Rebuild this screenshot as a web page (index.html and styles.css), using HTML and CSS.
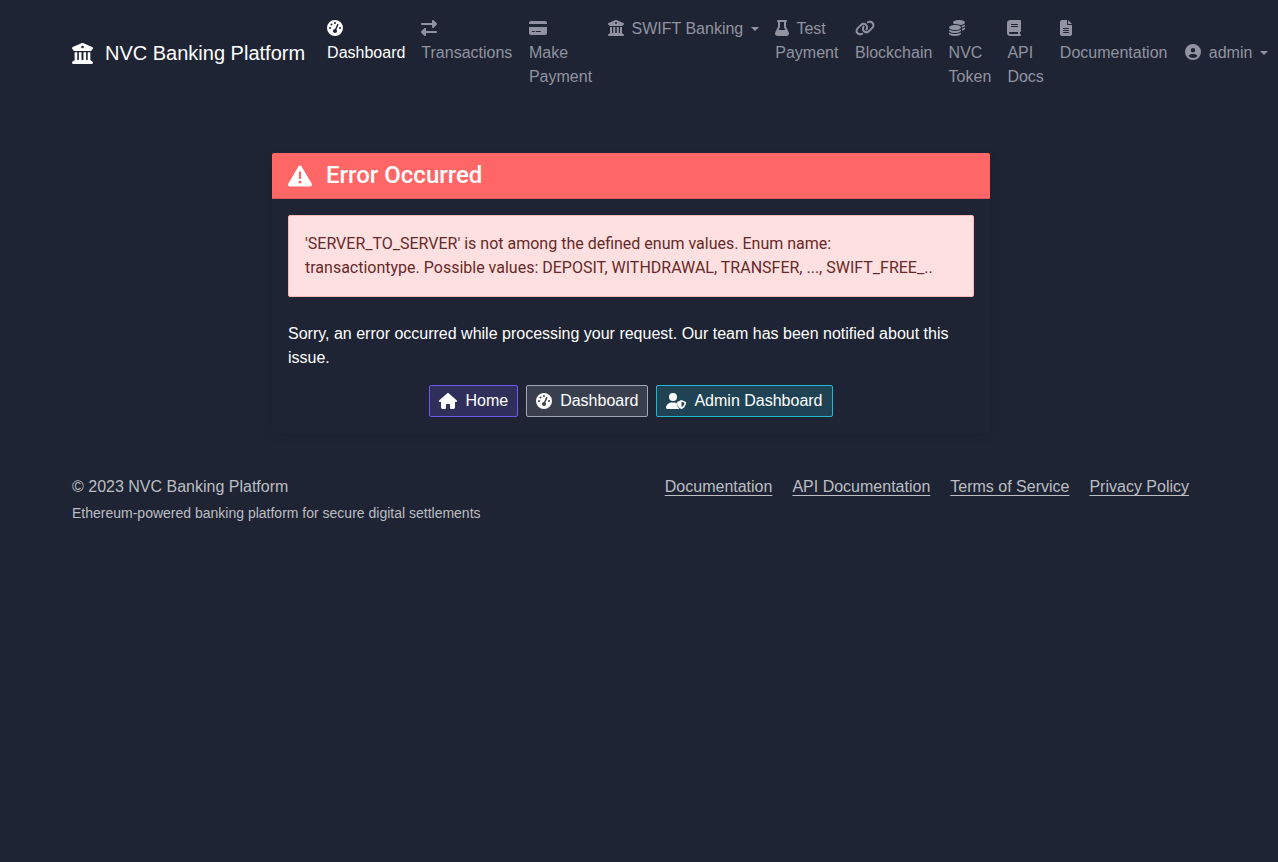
FILE: index.html
```html
<!DOCTYPE html>
<html lang="en">
<head>
<meta charset="utf-8">
<meta name="viewport" content="width=device-width, initial-scale=1">
<title>Error - NVC Banking Platform</title>
<link rel="stylesheet" href="styles.css">
</head>
<body>
<svg class="sprite" aria-hidden="true">
  <symbol id="i-bank" viewBox="0 0 512 512"><path fill-rule="evenodd" d="M243.4 2.6l-224 96c-14 6-21.800 21-18.700 35.800S16.800 160 32 160v8c0 13.300 10.700 24 24 24h400c13.300 0 24-10.700 24-24v-8c15.200 0 28.300-10.700 31.300-25.600s-4.800-29.900-18.700-35.800l-224-96c-8-3.400-17.200-3.400-25.200 0zM128 224H64v196.300c-.6.3-1.200.7-1.800 1.100l-48 32c-11.700 7.800-17 22.400-12.900 35.900S17.900 512 32 512h448c14.100 0 26.500-9.200 30.600-22.700s-1.100-28.100-12.900-35.900l-48-32c-.6-.4-1.200-.7-1.800-1.100V224h-64v192h-40V224h-64v192h-48V224h-64v192h-40V224zM256 64a32 32 0 1 1 0 64 32 32 0 1 1 0-64z"/></symbol>
  <symbol id="i-gauge" viewBox="0 0 512 512"><path fill-rule="evenodd" d="M0 256a256 256 0 1 1 512 0A256 256 0 1 1 0 256zM288 96a32 32 0 1 0-64 0 32 32 0 1 0 64 0zM256 416c35.300 0 64-28.700 64-64 0-17.400-6.900-33.100-18.100-44.600L366 161.700c5.300-12.100-.2-26.300-12.300-31.600s-26.300.2-31.600 12.300L257.900 288H256c-35.300 0-64 28.700-64 64s28.700 64 64 64zM176 144a32 32 0 1 0-64 0 32 32 0 1 0 64 0zM96 288a32 32 0 1 0 0-64 32 32 0 1 0 0 64zM448 256a32 32 0 1 0-64 0 32 32 0 1 0 64 0z"/></symbol>
  <symbol id="i-transfer" viewBox="0 0 512 512"><path d="M32 96h320V32c0-12.900 7.800-24.600 19.800-29.600s25.700-2.200 34.900 6.900l96 96c6 6 9.400 14.100 9.400 22.600s-3.400 16.600-9.400 22.600l-96 96c-9.200 9.200-22.900 11.900-34.900 6.900S352 236.900 352 224v-64H32c-17.700 0-32-14.300-32-32s14.300-32 32-32zM480 352c17.700 0 32 14.300 32 32s-14.300 32-32 32H160v64c0 12.900-7.800 24.600-19.800 29.600s-25.700 2.200-34.900-6.900l-96-96c-6-6-9.400-14.100-9.400-22.600s3.400-16.600 9.400-22.600l96-96c9.200-9.200 22.900-11.900 34.900-6.900S160 275.100 160 288v64z"/></symbol>
  <symbol id="i-card" viewBox="0 0 576 512"><path fill-rule="evenodd" d="M64 32C28.700 32 0 60.700 0 96v32h576V96c0-35.300-28.700-64-64-64H64zM576 224H0v192c0 35.300 28.700 64 64 64h448c35.300 0 64-28.700 64-64V224zM112 352h64a16 16 0 0 1 0 32h-64a16 16 0 0 1 0-32zM240 352h128a16 16 0 0 1 0 32H240a16 16 0 0 1 0-32z"/></symbol>
  <symbol id="i-flask" viewBox="0 0 448 512"><path fill-rule="evenodd" d="M288 0H96a32 32 0 0 0 0 64v151L7 400c-4 10-7 21-7 32 0 44 36 80 80 80h288c44 0 80-36 80-80 0-11-3-22-7-32L352 215V64a32 32 0 0 0 0-64zM160 64h128v151c0 12 3 22 8 32l36 73H116l36-73c5-10 8-20 8-32z"/></symbol>
  <symbol id="i-link" viewBox="0 0 640 512"><path d="M579.800 267.700c56.500-56.500 56.500-148 0-204.500-50-50-128.800-56.500-186.300-15.400l-1.600 1.100c-14.400 10.300-17.700 30.300-7.400 44.600s30.300 17.700 44.600 7.400l1.600-1.100c32.100-22.900 76-19.300 103.800 8.600 31.500 31.500 31.500 82.500 0 114L422.300 334.800c-31.500 31.500-82.500 31.500-114 0-27.900-27.900-31.500-71.800-8.600-103.800l1.100-1.600c10.300-14.400 6.900-34.400-7.400-44.600s-34.400-6.900-44.600 7.400l-1.100 1.600C206.500 251.200 213 330 263 380c56.500 56.500 148 56.500 204.500 0zM60.200 244.300c-56.500 56.500-56.500 148 0 204.500 50 50 128.800 56.500 186.300 15.400l1.600-1.100c14.400-10.300 17.700-30.300 7.400-44.600s-30.300-17.700-44.600-7.400l-1.600 1.100c-32.100 22.900-76 19.300-103.800-8.600C74 372 74 321 105.500 289.500l112.200-112.300c31.500-31.500 82.500-31.500 114 0 27.900 27.900 31.500 71.800 8.600 103.900l-1.100 1.600c-10.300 14.400-6.900 34.400 7.400 44.600s34.400 6.900 44.600-7.400l1.100-1.600C433.500 260.800 427 182 377 132c-56.500-56.500-148-56.500-204.500 0z"/></symbol>
  <symbol id="i-coins" viewBox="0 0 512 512"><path d="M512 80c0 18-14.300 34.600-38.400 48-29.100 16.100-72.500 27.500-122.300 30.900-3.700-1.800-7.400-3.500-11.300-5C300.600 137.400 248.200 128 192 128c-8.300 0-16.400.2-24.500.6l-1.100-.6C142.300 114.600 128 98 128 80c0-44.200 86-80 192-80s192 35.800 192 80zM160.700 161.100c10.200-.7 20.700-1.100 31.300-1.100 62.200 0 117.400 12.300 152.500 31.400C369.300 204.900 384 221.700 384 240c0 4-.7 7.900-2.100 11.700-4.600 13.200-17 25.300-35 35.500-31.900 19.100-89.300 32.800-154.900 32.800-63 0-118.700-12.600-153.800-32.100C14.100 274.500 0 258 0 240c0-34.800 53.400-64.500 128-75.400 10.500-1.500 21.400-2.700 32.700-3.500zM416 240c0-21.900-10.600-39.900-24.100-53.400 28.300-4.400 54.200-11.400 76.200-20.500 16.300-6.800 31.500-15.200 43.900-25.500V176c0 19.300-16.500 37.100-43.800 50.900-14.600 7.400-32.400 13.700-52.400 18.500.1-1.800.1-3.500.1-5.400zm-32 96c0 18-14.300 34.600-38.400 48C310.500 403.500 255 416 192 416s-118.500-12.600-153.600-32C14.300 370.600 0 354 0 336v-35.400c12.500 10.300 27.600 18.700 43.900 25.500C83.400 342.600 135.800 352 192 352s108.600-9.400 148.100-25.900c16.600-6.700 31.300-15.100 43.900-25.500zm32 0v-58.800c18.600-4.200 36.800-9.500 52.100-16 16.300-6.800 31.500-15.200 43.900-25.500V272c0 30.500-40.100 52.300-96.100 64.800zM192 448c56.200 0 108.600-9.400 148.100-25.900 16.300-6.800 31.500-15.200 43.900-25.500V432c0 44.200-86 80-192 80S0 476.200 0 432v-35.400c12.500 10.300 27.600 18.700 43.900 25.500C83.400 438.600 135.800 448 192 448z"/></symbol>
  <symbol id="i-book" viewBox="0 0 448 512"><path fill-rule="evenodd" d="M96 0C43 0 0 43 0 96v320c0 53 43 96 96 96h320a32 32 0 0 0 0-64v-64c17.700 0 32-14.300 32-32V32c0-17.700-14.300-32-32-32H96zM96 384h256v64H96a32 32 0 0 1 0-64zM144 128h192a16 16 0 0 1 0 32H144a16 16 0 0 1 0-32zM144 192h192a16 16 0 0 1 0 32H144a16 16 0 0 1 0-32z"/></symbol>
  <symbol id="i-file" viewBox="0 0 384 512"><path fill-rule="evenodd" d="M64 0C28.700 0 0 28.700 0 64v384c0 35.300 28.700 64 64 64h256c35.300 0 64-28.700 64-64V160H256c-17.700 0-32-14.300-32-32V0H64zM256 0v128h128L256 0zM112 256h160a16 16 0 0 1 0 32H112a16 16 0 0 1 0-32zM112 320h160a16 16 0 0 1 0 32H112a16 16 0 0 1 0-32zM112 384h160a16 16 0 0 1 0 32H112a16 16 0 0 1 0-32z"/></symbol>
  <symbol id="i-user" viewBox="0 0 512 512"><path fill-rule="evenodd" d="M399 384.200C376.900 345.800 335.400 320 288 320h-64c-47.400 0-88.900 25.800-111 64.200 35.200 39.200 86.200 63.800 143 63.800s107.800-24.700 143-63.800zM0 256a256 256 0 1 1 512 0A256 256 0 1 1 0 256zM256 272a72 72 0 1 0 0-144 72 72 0 1 0 0 144z"/></symbol>
  <symbol id="i-warning" viewBox="0 0 512 512"><path fill-rule="evenodd" d="M256 32c14.200 0 27.300 7.500 34.500 19.800l216 368c7.300 12.400 7.300 27.700.2 40.100S486.300 480 472 480H40c-14.300 0-27.600-7.700-34.700-20.100s-7-27.800.2-40.100l216-368C228.700 39.500 241.800 32 256 32zM256 160c-13.300 0-24 10.700-24 24v112a24 24 0 0 0 48 0V184c0-13.300-10.700-24-24-24zM288 384a32 32 0 1 0-64 0 32 32 0 1 0 64 0z"/></symbol>
  <symbol id="i-home" viewBox="0 0 576 512"><path d="M575.800 255.500c0 18-15 32.100-32 32.100h-32l.7 160.200c0 36-22 64.200-56.500 64.200H392c-22.100 0-40-17.900-40-40v-88c0-17.700-14.300-32-32-32h-64c-17.700 0-32 14.300-32 32v88c0 22.100-17.900 40-40 40h-56c-35 0-64-20-64-64V287.600H32c-18 0-32-14-32-32.100 0-9 3-17 10-24L266.400 8c7-7 15-8 22-8s15 2 21 7l255.400 224.500c8 7 12 15 11 24z"/></symbol>
  <symbol id="i-admin" viewBox="0 0 640 512"><path fill-rule="evenodd" d="M224 256A128 128 0 1 0 224 0a128 128 0 1 0 0 256zM178.300 304C79.800 304 0 383.800 0 482.300 0 498.700 13.300 512 29.700 512h388.600c5 0 10-1 14-4-50-40-81-105-80-176-24-18-51-28-82-28zM496 225l128 51c10 4 16 13 16 23 0 84-36 174-134 211q-10 4-20 0c-98-37-134-127-134-211 0-10 6-19 16-23zM496 277v180c67-31 91-91 94-142z"/></symbol>
</svg>

<nav class="navbar" aria-label="Main">
  <a class="brand" href="#"><svg class="icon icon-brand"><use href="#i-bank"/></svg>NVC Banking Platform</a>
  <ul class="menu">
    <li><a class="active" href="#"><svg class="icon"><use href="#i-gauge"/></svg> Dashboard</a></li>
    <li><a href="#"><svg class="icon"><use href="#i-transfer"/></svg> Transactions</a></li>
    <li><a href="#"><svg class="icon icon-wide"><use href="#i-card"/></svg> Make Payment</a></li>
    <li><a class="toggle" href="#"><svg class="icon"><use href="#i-bank"/></svg> SWIFT Banking</a></li>
    <li><a href="#"><svg class="icon icon-book"><use href="#i-flask"/></svg> Test Payment</a></li>
    <li><a href="#"><svg class="icon icon-extra"><use href="#i-link"/></svg> Blockchain</a></li>
    <li><a href="#"><svg class="icon"><use href="#i-coins"/></svg> NVC Token</a></li>
    <li><a href="#"><svg class="icon icon-book"><use href="#i-book"/></svg> API Docs</a></li>
    <li><a href="#"><svg class="icon icon-file"><use href="#i-file"/></svg> Documentation</a></li>
    <li class="account"><a class="toggle" href="#"><svg class="icon"><use href="#i-user"/></svg> admin</a></li>
  </ul>
</nav>

<main class="page">
  <section class="card">
    <h1 class="card-title"><svg class="icon icon-title"><use href="#i-warning"/></svg>Error Occurred</h1>
    <div class="card-body">
      <p class="alert" role="alert">'SERVER_TO_SERVER' is not among the defined enum values. Enum name:<br>transactiontype. Possible values: DEPOSIT, WITHDRAWAL, TRANSFER, ..., SWIFT_FREE_..</p>
      <p class="message">Sorry, an error occurred while processing your request. Our team has been notified about this issue.</p>
      <div class="actions">
        <a class="btn btn-primary" href="#"><svg class="icon icon-wide"><use href="#i-home"/></svg>Home</a>
        <a class="btn btn-secondary" href="#"><svg class="icon"><use href="#i-gauge"/></svg>Dashboard</a>
        <a class="btn btn-info" href="#"><svg class="icon icon-extra"><use href="#i-admin"/></svg>Admin Dashboard</a>
      </div>
    </div>
  </section>
</main>

<footer class="footer">
  <div>
    <p>© 2023 NVC Banking Platform</p>
    <p class="tagline">Ethereum-powered banking platform for secure digital settlements</p>
  </div>
  <ul class="footer-links">
    <li><a href="#">Documentation</a></li>
    <li><a href="#">API Documentation</a></li>
    <li><a href="#">Terms of Service</a></li>
    <li><a href="#">Privacy Policy</a></li>
  </ul>
</footer>
</body>
</html>
```

FILE: styles.css
```css
* {
  box-sizing: border-box;
}

body {
  margin: 0;
  background: #1e2433;
  color: #fff;
  font: 16px/24px "Liberation Sans", Arial, sans-serif;
}

p, h1, ul {
  margin: 0;
  padding: 0;
}

ul {
  list-style: none;
}

.sprite {
  position: absolute;
  width: 0;
  height: 0;
}

.icon {
  width: 16px;
  height: 16px;
  fill: currentColor;
  vertical-align: -2px;
  margin-right: 3px;
}

.icon-wide { width: 18px; }
.icon-extra { width: 20px; }
.icon-book { width: 14px; }
.icon-file { width: 12px; }

.navbar {
  display: flex;
  align-items: center;
  padding: 9px 0 8px 72px;
}

.brand {
  display: flex;
  align-items: center;
  gap: 12px;
  flex: none;
  margin-right: 14px;
  color: #fff;
  font-size: 20px;
  line-height: 30px;
  text-decoration: none;
  white-space: nowrap;
}

.icon-brand {
  width: 21px;
  height: 21px;
  margin: 0;
}

.menu {
  flex: 1;
  display: grid;
  grid-template-columns: 94fr 108fr 79fr 166fr 80fr 94fr 59fr 52fr 126fr 101fr;
}

.menu a {
  display: block;
  padding: 8px;
  color: #9193a0;
  text-decoration: none;
}

.menu a.active {
  color: #fff;
}

.menu .account {
  align-self: center;
}

.menu .toggle {
  white-space: nowrap;
}

.toggle::after {
  content: "";
  display: inline-block;
  margin-left: 8px;
  vertical-align: 3px;
  border: 4px solid transparent;
  border-top-color: currentColor;
  border-bottom: 0;
}

.page {
  padding: 48px 288px 0 272px;
}

.card {
  border-radius: 2px;
  overflow: hidden;
  box-shadow: 0 2px 12px rgba(0, 0, 0, 0.08);
}

.card-title {
  display: flex;
  align-items: center;
  gap: 14px;
  padding: 8px 16px;
  background: #ff6767;
  border-bottom: 1px solid #d45a60;
  font: 500 24px/29px Roboto, "Liberation Sans", sans-serif;
}

.icon-title {
  width: 24px;
  height: 24px;
  margin: 0;
}

.card-body {
  padding: 16px;
}

.alert {
  margin-bottom: 25px;
  padding: 16px;
  background: #ffe0e0;
  border: 1px solid #ffb8b8;
  border-radius: 2px;
  color: #662929;
  font-family: Roboto, "Liberation Sans", sans-serif;
}

.message {
  margin-bottom: 15px;
}

.actions {
  display: flex;
  justify-content: center;
  gap: 8px;
}

.btn {
  display: flex;
  align-items: center;
  gap: 8px;
  padding: 3px 9px;
  border: 1px solid;
  border-radius: 2px;
  color: #fff;
  text-decoration: none;
}

.btn .icon {
  margin: 0;
}

.btn-primary { background: #302f5b; border-color: #6f5af0; }
.btn-secondary { background: #3a3f4e; border-color: #a0a6b8; }
.btn-info { background: #1f4254; border-color: #22b8cf; }

.footer {
  display: flex;
  justify-content: space-between;
  padding: 42px 89px 24px 72px;
  color: #bcbec3;
}

.tagline {
  margin-top: 4px;
  font-size: 14px;
  line-height: 21px;
}

.footer-links {
  display: flex;
  gap: 20px;
}

.footer-links a {
  color: inherit;
  text-underline-offset: 3px;
}
```
